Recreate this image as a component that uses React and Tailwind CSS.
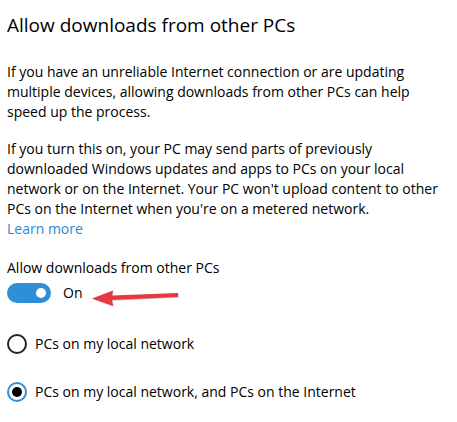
import React from 'react';

function Toggle() {
  return (
    <div className="w-[44px] h-[20px] rounded-full bg-[#2e8fd6] flex items-center justify-end pr-[5px]">
      <div className="w-[10px] h-[10px] rounded-full bg-white" />
    </div>
  );
}

function Radio({ checked, label }) {
  return (
    <div className="flex items-center gap-[8px] h-[20px]">
      {checked ? (
        <div className="w-[20px] h-[20px] rounded-full border-2 border-[#2e8fd6] flex items-center justify-center">
          <div className="w-[10px] h-[10px] rounded-full bg-black" />
        </div>
      ) : (
        <div className="w-[20px] h-[20px] rounded-full border-2 border-[#222]" />
      )}
      <span>{label}</span>
    </div>
  );
}

// red annotation arrow drawn over the screenshot
function Arrow() {
  return (
    <svg className="absolute left-[88px] top-[286px]" width="96" height="24" viewBox="0 0 96 24">
      <path d="M4 12.5 L25 4.5 L24 9.5 L90 7 L90 11 L24 14 L25 20 Z" fill="#9a9a9a" opacity="0.5" transform="translate(0.8 0.8)" />
      <path d="M4 12.5 L25 4.5 L24 9.5 L90 7 L90 11 L24 14 L25 20 Z" fill="#e8383f" />
    </svg>
  );
}

export default function App() {
  return (
    <div
      className="relative w-[457px] h-[422px] bg-white text-black px-[7px] pt-[11px] text-[14px] leading-[20px]"
      style={{ fontFamily: '"Open Sans", "Noto Sans", sans-serif' }}
    >
      <h1 className="text-[19px] leading-[28px] font-normal">Allow downloads from other PCs</h1>

      <p className="mt-[23px]">
        If you have an unreliable Internet connection or are updating multiple devices, allowing downloads from other PCs can help speed up the process.
      </p>

      <p className="mt-[17px]">
        If you turn this on, your PC may send parts of previously downloaded Windows updates and apps to PCs on your local network or on the Internet. Your PC won't upload content to other PCs on the Internet when you're on a metered network.
      </p>
      <div className="text-[#2b88d8]">Learn more</div>

      <div className="mt-[19px]">Allow downloads from other PCs</div>
      <div className="flex items-center gap-[12px] mt-[5px]">
        <Toggle />
        <span>On</span>
      </div>

      <div className="flex flex-col gap-[28px] mt-[31px]">
        <Radio label="PCs on my local network" />
        <Radio checked label="PCs on my local network, and PCs on the Internet" />
      </div>

      <Arrow />
    </div>
  );
}
